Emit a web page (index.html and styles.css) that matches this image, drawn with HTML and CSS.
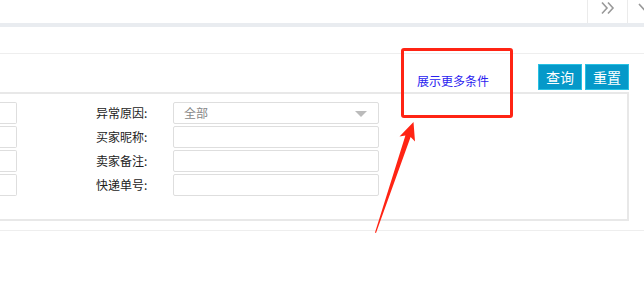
FILE: index.html
```html
<!DOCTYPE html>
<html lang="zh-CN">
<head>
  <meta charset="UTF-8" />
  <title>订单查询</title>
  <link rel="stylesheet" href="styles.css">
</head>
<body>

  <!-- tab bar -->
  <div class="tab-bar">
    <div class="tab-tools">
      <span class="tab-btn">
        <svg width="16" height="14" viewBox="0 0 16 14"><path d="M2 1.5l5 5.5-5 5.5M8 1.5l5 5.5-5 5.5" fill="none" stroke="#999" stroke-width="1.6"/></svg>
      </span>
      <span class="tab-btn tab-btn-cut">
        <svg width="16" height="14" viewBox="0 0 16 14"><path d="M11 3l5 5.5 5-5.5" fill="none" stroke="#999" stroke-width="1.6"/></svg>
      </span>
    </div>
  </div>

  <div class="page">
    <div class="card-head"></div>

    <div class="search">
      <div class="search-bar">
        <a class="more-link" href="#">展示更多条件</a>
        <button class="btn">查询</button>
        <button class="btn">重置</button>
      </div>

      <div class="search-box">
        <div class="row">
          <span class="cut-input"></span>
          <label class="label">异常原因:</label>
          <div class="select">全部<i class="caret"></i></div>
        </div>
        <div class="row">
          <span class="cut-input"></span>
          <label class="label">买家昵称:</label>
          <input class="input" type="text">
        </div>
        <div class="row">
          <span class="cut-input"></span>
          <label class="label">卖家备注:</label>
          <input class="input" type="text">
        </div>
        <div class="row">
          <span class="cut-input"></span>
          <label class="label">快递单号:</label>
          <input class="input" type="text">
        </div>
      </div>
    </div>

    <div class="list-top"></div>
  </div>

  <!-- annotation -->
  <div class="mark-box"></div>
  <svg class="mark-arrow" width="644" height="284" viewBox="0 0 644 284">
    <polygon points="413.5,122 415,141.6 410.6,137 376,233 375,232.6 405.4,135.6 399.5,136.4" fill="#ff2414"/>
  </svg>

</body>
</html>
```

FILE: styles.css
```css
/* Base */
* {
  margin: 0;
  padding: 0;
  box-sizing: border-box;
}

body {
  width: 644px;
  height: 284px;
  overflow: hidden;
  background: #fff;
  font-family: "Noto Sans CJK SC", "Liberation Sans", sans-serif;
  font-size: 12px;
  color: #333;
  position: relative;
}

/* Tab bar */
.tab-bar {
  height: 23px;
  display: flex;
  justify-content: flex-end;
  border-bottom: 4px solid #e9ecf0;
  box-sizing: content-box;
}

.tab-tools {
  display: flex;
}

.tab-btn {
  width: 40px;
  height: 23px;
  border-left: 1px solid #ebebeb;
  display: flex;
  align-items: flex-start;
  justify-content: center;
  padding-top: 1px;
  overflow: hidden;
}

.tab-btn-cut {
  width: 17px;
  justify-content: flex-start;
}

/* Card */
.card-head {
  height: 27px;
  border-bottom: 1px solid #eeeeee;
}

.search {
  width: 629px;
}

.search-bar {
  height: 38px;
  padding-top: 10px;
  display: flex;
  justify-content: flex-end;
  align-items: flex-start;
  gap: 3px;
}

.more-link {
  color: #2a22f0;
  text-decoration: none;
  font-size: 12px;
  line-height: 16px;
  margin-top: 9px;
  margin-right: 46px;
}

.btn {
  width: 44px;
  height: 26px;
  background: #0599c9;
  border: 1px solid #27c1e3;
  color: #fff;
  font-family: inherit;
  font-size: 14px;
  line-height: 22px;
  cursor: pointer;
}

/* Search box */
.search-box {
  border: 2px solid #e8e8e8;
  border-left: none;
  height: 129px;
  padding-top: 8px;
}

.row {
  display: flex;
  align-items: center;
  height: 22px;
  margin-bottom: 2px;
}

.cut-input {
  width: 17px;
  height: 22px;
  border: 1px solid #dedede;
  border-left: none;
  border-radius: 0 2px 2px 0;
}

.label {
  width: 156px;
  padding-left: 79px;
  line-height: 16px;
  color: #222;
}

.input,
.select {
  width: 206px;
  height: 22px;
  border: 1px solid #dedede;
  border-radius: 2px;
  font-family: inherit;
  font-size: 12px;
  outline: none;
}

.select {
  position: relative;
  padding-left: 10px;
  line-height: 20px;
  color: #888;
}

.caret {
  position: absolute;
  right: 11px;
  top: 8px;
  border-left: 6px solid transparent;
  border-right: 6px solid transparent;
  border-top: 6px solid #bbb;
}

.list-top {
  margin-top: 9px;
  border-top: 1px solid #eeeeee;
}

/* Annotation overlay */
.mark-box {
  position: absolute;
  left: 401px;
  top: 48px;
  width: 112px;
  height: 70px;
  border: 3px solid #ff2414;
  border-radius: 3px;
}

.mark-arrow {
  position: absolute;
  left: 0;
  top: 0;
  pointer-events: none;
}
```
